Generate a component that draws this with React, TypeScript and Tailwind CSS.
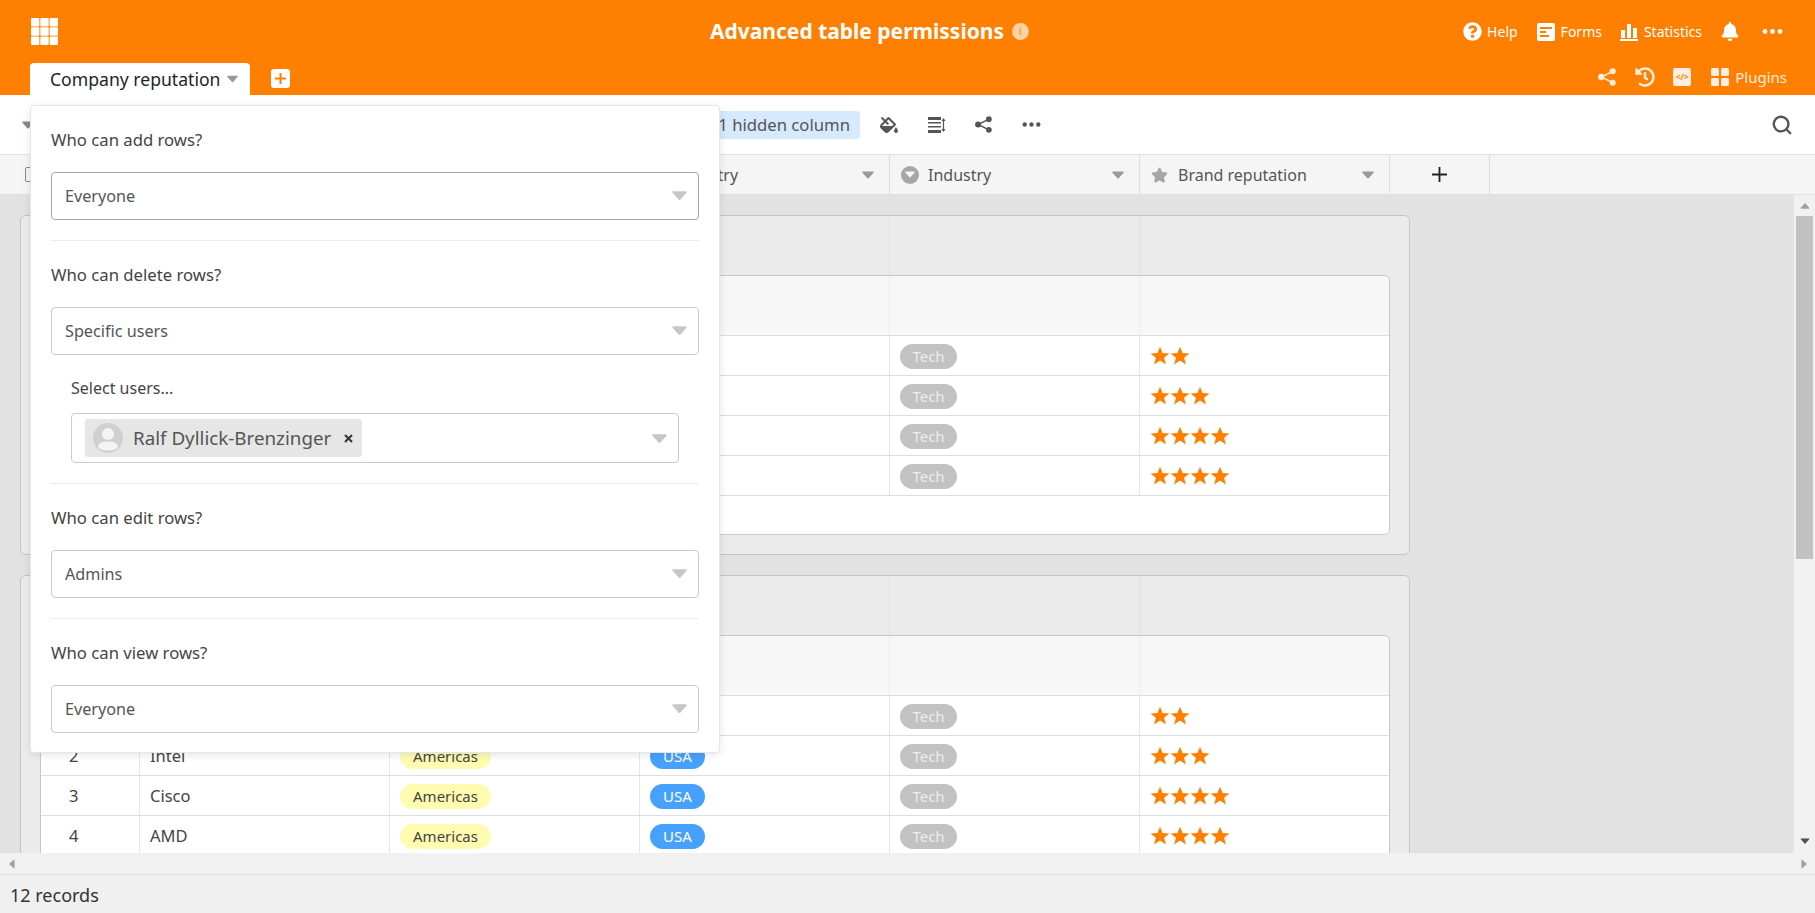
import type { ReactNode } from "react";
import { Search } from "lucide-react";
import { FaStar, FaBell, FaHistory, FaFillDrip, FaQuestionCircle } from "react-icons/fa";

type Row = { no?: number; name?: string; region?: boolean; country?: boolean; stars: number };

const hiddenRows: Row[] = [{ stars: 2 }, { stars: 3 }, { stars: 4 }, { stars: 4 }];
const visibleRows: Row[] = [
  { stars: 2 },
  { no: 2, name: "Intel", region: true, country: true, stars: 3 },
  { no: 3, name: "Cisco", region: true, country: true, stars: 4 },
  { no: 4, name: "AMD", region: true, country: true, stars: 4 },
];

function Caret({ className = "" }: { className?: string }) {
  return (
    <svg viewBox="0 0 12 8" className={className} fill="currentColor">
      <path d="M1 0.5h10c.7 0 1 .7.6 1.2l-5 5.6c-.3.4-.9.4-1.2 0l-5-5.6C0 1.2.3.5 1 .5z" />
    </svg>
  );
}

function Dots({ className = "" }: { className?: string }) {
  return (
    <svg viewBox="0 0 21 5" className={className} fill="currentColor">
      <circle cx="3" cy="2.5" r="2.4" />
      <circle cx="10.5" cy="2.5" r="2.4" />
      <circle cx="18" cy="2.5" r="2.4" />
    </svg>
  );
}

function ShareIcon({ className = "" }: { className?: string }) {
  return (
    <svg viewBox="0 0 19 19" className={className} fill="currentColor">
      <path d="M15.5 3.5L3.5 9.5l12 6" fill="none" stroke="currentColor" strokeWidth="1.6" />
      <circle cx="15.5" cy="3.5" r="3.2" />
      <circle cx="3.4" cy="9.5" r="3.3" />
      <circle cx="15.5" cy="15.5" r="3.2" />
    </svg>
  );
}

function RatingStar() {
  return (
    <svg viewBox="0 0 20 20" className="h-5 w-5" fill="#ff7f00">
      <polygon points="10,0.8 12.6,7 19.4,7.4 14.1,11.7 15.9,18.4 10,14.6 4.1,18.4 5.9,11.7 0.6,7.4 7.4,7" />
    </svg>
  );
}

function Pill({ children, className }: { children: string; className: string }) {
  return <span className={`flex h-[25px] items-center justify-center rounded-full text-[15px] ${className}`}>{children}</span>;
}

function DataRow({ row }: { row: Row }) {
  return (
    <div className="flex h-10 border-b border-[#dedede] bg-white text-[16.5px] text-[#444]">
      <div className="flex w-[99px] items-center border-r border-[#e6e6e6] pl-[28px] pt-[2px]">{row.no}</div>
      <div className="flex w-[250px] items-center border-r border-[#e6e6e6] pl-[10px] pt-[2px]">{row.name}</div>
      <div className="flex w-[250px] items-center border-r border-[#e6e6e6] pl-[10px] pt-[2px]">
        {row.region && <Pill className="w-[91px] bg-[#fffbb0] text-[#444]">Americas</Pill>}
      </div>
      <div className="flex w-[250px] items-center border-r border-[#e6e6e6] pl-[10px] pt-[2px]">
        {row.country && <Pill className="w-[55px] bg-[#46a1fd] text-white">USA</Pill>}
      </div>
      <div className="flex w-[250px] items-center border-r border-[#e6e6e6] pl-[10px] pt-[2px]">
        <Pill className="w-[57px] bg-[#c2c2c2] text-[#ececec]">Tech</Pill>
      </div>
      <div className="flex w-[249px] items-center pl-[10px]">
        {Array.from({ length: row.stars }).map((_, i) => (
          <RatingStar key={i} />
        ))}
      </div>
    </div>
  );
}

function Group({ rows }: { rows: Row[] }) {
  return (
    <div className="mb-5 ml-5 w-[1390px] rounded-[6px] border border-[#c4c4c4] bg-[#ebebeb]">
      <div className="flex h-[59px]">
        <div className="w-[119px] border-r border-[#e0e0e0]" />
        <div className="w-[250px] border-r border-[#e0e0e0]" />
        <div className="w-[250px] border-r border-[#e0e0e0]" />
        <div className="w-[250px] border-r border-[#e0e0e0]" />
        <div className="w-[250px] border-r border-[#e0e0e0]" />
      </div>
      <div className="mx-[19px] mb-[19px] overflow-hidden rounded-[6px] border border-[#c8c8c8]">
        <div className="flex h-[60px] border-b border-[#dedede] bg-[#f7f7f7]">
          <div className="w-[99px] border-r border-[#ececec]" />
          <div className="w-[250px] border-r border-[#ececec]" />
          <div className="w-[250px] border-r border-[#ececec]" />
          <div className="w-[250px] border-r border-[#ececec]" />
          <div className="w-[250px] border-r border-[#ececec]" />
        </div>
        {rows.map((row, i) => (
          <DataRow key={i} row={row} />
        ))}
        <div className="h-[38px] bg-white" />
      </div>
    </div>
  );
}

function Column({ icon, label }: { icon: ReactNode; label: string }) {
  return (
    <div className="flex w-[250px] shrink-0 items-center border-r border-[#dedede] pl-[10px] pr-[15px]">
      <span className="flex w-[19px] justify-center text-[#a6a6a6]">{icon}</span>
      <span className="ml-[9px] text-[16px] text-[#555]">{label}</span>
      <Caret className="ml-auto h-[8px] w-[12px] text-[#999]" />
    </div>
  );
}

function Select({ value, focus }: { value: string; focus?: boolean }) {
  return (
    <div className={`flex h-[48px] items-center rounded-[4px] border pl-[13px] pr-[11px] text-[16.2px] text-[#555] ${focus ? "border-[#a6a6a6]" : "border-[#cccccc]"}`}>
      {value}
      <Caret className="mb-[2px] ml-auto h-[11px] w-[15px] text-[#c6c6c6]" />
    </div>
  );
}

function Label({ children }: { children: string }) {
  return <div className="mb-[20px] h-[24px] text-[16.7px] leading-[24px]">{children}</div>;
}

function PermissionPopup() {
  return (
    <div className="absolute left-[30px] top-[105px] z-20 w-[690px] rounded-[4px] border border-[#e3e6ec] bg-white px-[20px] text-[#444] shadow-[0_2px_8px_rgba(0,0,0,0.1)]">
      <div className="pb-[20px] pt-[22px]">
        <Label>Who can add rows?</Label>
        <Select value="Everyone" focus />
      </div>
      <div className="border-t border-[#ececec] pb-[20px] pt-[22px]">
        <Label>Who can delete rows?</Label>
        <Select value="Specific users" />
        <div className="mt-[21px] px-[20px]">
          <div className="mb-[13px] h-[24px] text-[16px] leading-[24px]">Select users...</div>
          <div className="flex h-[50px] items-center rounded-[4px] border border-[#cccccc] pl-[13px] pr-[11px]">
            <div className="flex h-[38px] w-[277px] items-center rounded-[3px] bg-[#e6e6e6] pl-[8px]">
              <svg viewBox="0 0 30 30" className="h-[30px] w-[30px] shrink-0">
                <circle cx="15" cy="15" r="15" fill="#d0d0d0" />
                <circle cx="15" cy="11" r="6" fill="#f4f4f4" />
                <ellipse cx="15" cy="23" rx="10" ry="4.5" fill="#f4f4f4" />
              </svg>
              <span className="ml-[10px] text-[18.8px] text-[#555]">Ralf Dyllick-Brenzinger</span>
              <svg viewBox="0 0 9 9" className="ml-auto mr-[9px] h-[9px] w-[9px]">
                <path d="M1 1l7 7M8 1l-7 7" stroke="#333" strokeWidth="2" />
              </svg>
            </div>
            <Caret className="ml-auto h-[11px] w-[15px] text-[#c6c6c6]" />
          </div>
        </div>
      </div>
      <div className="border-t border-[#ececec] pb-[20px] pt-[22px]">
        <Label>Who can edit rows?</Label>
        <Select value="Admins" />
      </div>
      <div className="border-t border-[#ececec] pb-[19px] pt-[22px]">
        <Label>Who can view rows?</Label>
        <Select value="Everyone" />
      </div>
    </div>
  );
}

export default function App() {
  return (
    <div className="relative flex h-screen w-screen flex-col overflow-hidden bg-white font-['Noto_Sans',sans-serif]">
      {/* orange header */}
      <header className="h-[95px] shrink-0 bg-[#ff8000] text-white">
        <div className="flex h-[63px] items-center pl-[31px] pr-[32px]">
          <svg viewBox="0 0 27 27" className="h-[27px] w-[27px]" fill="white">
            {[0, 9.3, 18.6].map((y) =>
              [0, 9.3, 18.6].map((x) => <rect key={`${x}-${y}`} x={x} y={y} width="8.4" height="8.4" rx="1" />)
            )}
          </svg>
          <div className="ml-[652px] text-[21px] font-bold">Advanced table permissions</div>
          <div className="ml-[8px] flex h-[17px] w-[17px] items-center justify-center rounded-full bg-[#ffd2a3] text-[11px] font-bold text-[#ffa34d]">i</div>
          <div className="ml-auto flex items-center text-[14px]">
            <FaQuestionCircle className="h-[19px] w-[19px]" />
            <span className="ml-[5px]">Help</span>
            <svg viewBox="0 0 18 18" className="ml-[19px] h-[18px] w-[18px]">
              <rect width="18" height="18" rx="2" fill="white" />
              <rect x="3" y="4" width="12" height="2" fill="#ff8000" />
              <rect x="3" y="8" width="6" height="2" fill="#ff8000" />
              <rect x="3" y="12" width="9" height="2" fill="#ff8000" />
            </svg>
            <span className="ml-[6px]">Forms</span>
            <svg viewBox="0 0 18 18" className="ml-[18px] h-[18px] w-[18px]" fill="white">
              <rect x="1" y="7" width="4" height="8" />
              <rect x="7" y="1" width="4" height="14" />
              <rect x="13" y="5" width="4" height="10" />
              <rect y="16" width="18" height="2" />
            </svg>
            <span className="ml-[6px]">Statistics</span>
            <FaBell className="ml-[19px] h-[19px] w-[18px]" />
            <Dots className="ml-[23px] h-[5px] w-[21px]" />
          </div>
        </div>
        <div className="flex h-[32px] items-end pl-[30px] pr-[28px]">
          <div className="flex h-[32px] w-[220px] items-center rounded-t-[4px] bg-white pl-[20px] text-[#212529]">
            <span className="text-[17.6px]">Company reputation</span>
            <Caret className="ml-[7px] h-[8px] w-[11px] text-[#999]" />
          </div>
          <div className="mb-[7px] ml-[21px] flex h-[19px] w-[19px] items-center justify-center rounded-[3px] bg-white">
            <svg viewBox="0 0 11 11" className="h-[11px] w-[11px]">
              <path d="M5.5 0v11M0 5.5h11" stroke="#ff8000" strokeWidth="2" />
            </svg>
          </div>
          <div className="mb-[7px] ml-auto flex items-center text-[15px] text-[#ffeedd]">
            <ShareIcon className="h-[18px] w-[18px]" />
            <FaHistory className="ml-[19px] h-[20px] w-[20px]" />
            <div className="ml-[18px] flex h-[18px] w-[18px] items-center justify-center rounded-[2px] bg-[#ffeedd] text-[8px] font-bold text-[#ff8000]">{"</>"}</div>
            <svg viewBox="0 0 18 18" className="ml-[20px] h-[18px] w-[18px]" fill="currentColor">
              <rect width="8" height="8" rx="1.5" />
              <rect x="10" width="8" height="8" rx="1.5" />
              <rect y="10" width="8" height="8" rx="1.5" />
              <rect x="10" y="10" width="8" height="8" rx="1.5" />
            </svg>
            <span className="ml-[6px]">Plugins</span>
          </div>
        </div>
      </header>

      {/* toolbar */}
      <div className="flex h-[59px] shrink-0 items-center pl-[22px] pr-[22px] text-[#555]">
        <Caret className="h-[8px] w-[12px] text-[#888]" />
        <div className="ml-[656px] flex h-[28px] w-[170px] items-center justify-end rounded-[4px] bg-[#d7e9fd] pr-[10px] text-[16.7px]">1 hidden column</div>
        <FaFillDrip className="ml-[20px] h-[18px] w-[18px]" />
        <svg viewBox="0 0 18 16" className="ml-[30px] h-[16px] w-[18px]" fill="currentColor">
          <rect width="13" height="3" />
          <rect y="5" width="13" height="1.5" />
          <rect y="9" width="13" height="1.5" />
          <rect y="13" width="13" height="3" />
          <path d="M15.5 1l2 3h-1.4v8h1.4l-2 3-2-3h1.4V4h-1.4z" />
        </svg>
        <ShareIcon className="ml-[29px] h-[17px] w-[17px]" />
        <Dots className="ml-[30px] h-[5px] w-[19px]" />
        <Search className="ml-auto h-[22px] w-[22px]" strokeWidth={2.6} />
      </div>

      {/* column header */}
      <div className="flex h-[41px] shrink-0 border-y border-[#e0e0e0] bg-[#f5f5f5]">
        <div className="flex w-[140px] shrink-0 items-center border-r border-[#dedede] pl-[25px]">
          <div className="h-[15px] w-[12px] rounded-[2px] border border-[#888]" />
        </div>
        <div className="w-[250px] shrink-0 border-r border-[#dedede]" />
        <div className="w-[250px] shrink-0 border-r border-[#dedede]" />
        <Column label="Country" icon={<Caret className="h-[8px] w-[12px]" />} />
        <Column
          label="Industry"
          icon={
            <span className="flex h-[18px] w-[18px] items-center justify-center rounded-full bg-[#a6a6a6]">
              <Caret className="h-[7px] w-[10px] text-[#f5f5f5]" />
            </span>
          }
        />
        <Column label="Brand reputation" icon={<FaStar className="h-[16px] w-[17px]" />} />
        <div className="flex w-[100px] shrink-0 items-center justify-center border-r border-[#dedede]">
          <svg viewBox="0 0 15 15" className="h-[15px] w-[15px]">
            <path d="M7.5 0v15M0 7.5h15" stroke="#222" strokeWidth="1.8" />
          </svg>
        </div>
      </div>

      {/* groups and scrollbars */}
      <div className="flex min-h-0 flex-1">
        <div className="min-w-0 flex-1 overflow-hidden bg-[#e2e2e2] pt-5">
          <Group rows={hiddenRows} />
          <Group rows={visibleRows} />
        </div>
        <div className="flex w-[21px] shrink-0 flex-col items-center bg-[#f1f1f1]">
          <Caret className="mt-[8px] h-[6px] w-[10px] rotate-180 text-[#a0a0a0]" />
          <div className="mt-[7px] h-[343px] w-[17px] bg-[#c1c1c1]" />
          <Caret className="mb-[9px] mt-auto h-[6px] w-[10px] text-[#505050]" />
        </div>
      </div>
      <div className="flex h-[21px] shrink-0 items-center justify-between bg-[#f1f1f1] pl-[7px] pr-[6px]">
        <Caret className="h-[6px] w-[10px] rotate-90 text-[#a0a0a0]" />
        <Caret className="h-[6px] w-[10px] -rotate-90 text-[#a0a0a0]" />
      </div>
      <div className="flex h-[39px] shrink-0 items-center border-t border-[#e0e0e0] bg-[#f0f0f0] pl-[10px] pt-[2px] text-[18px] text-[#333]">12 records</div>

      <PermissionPopup />
    </div>
  );
}
